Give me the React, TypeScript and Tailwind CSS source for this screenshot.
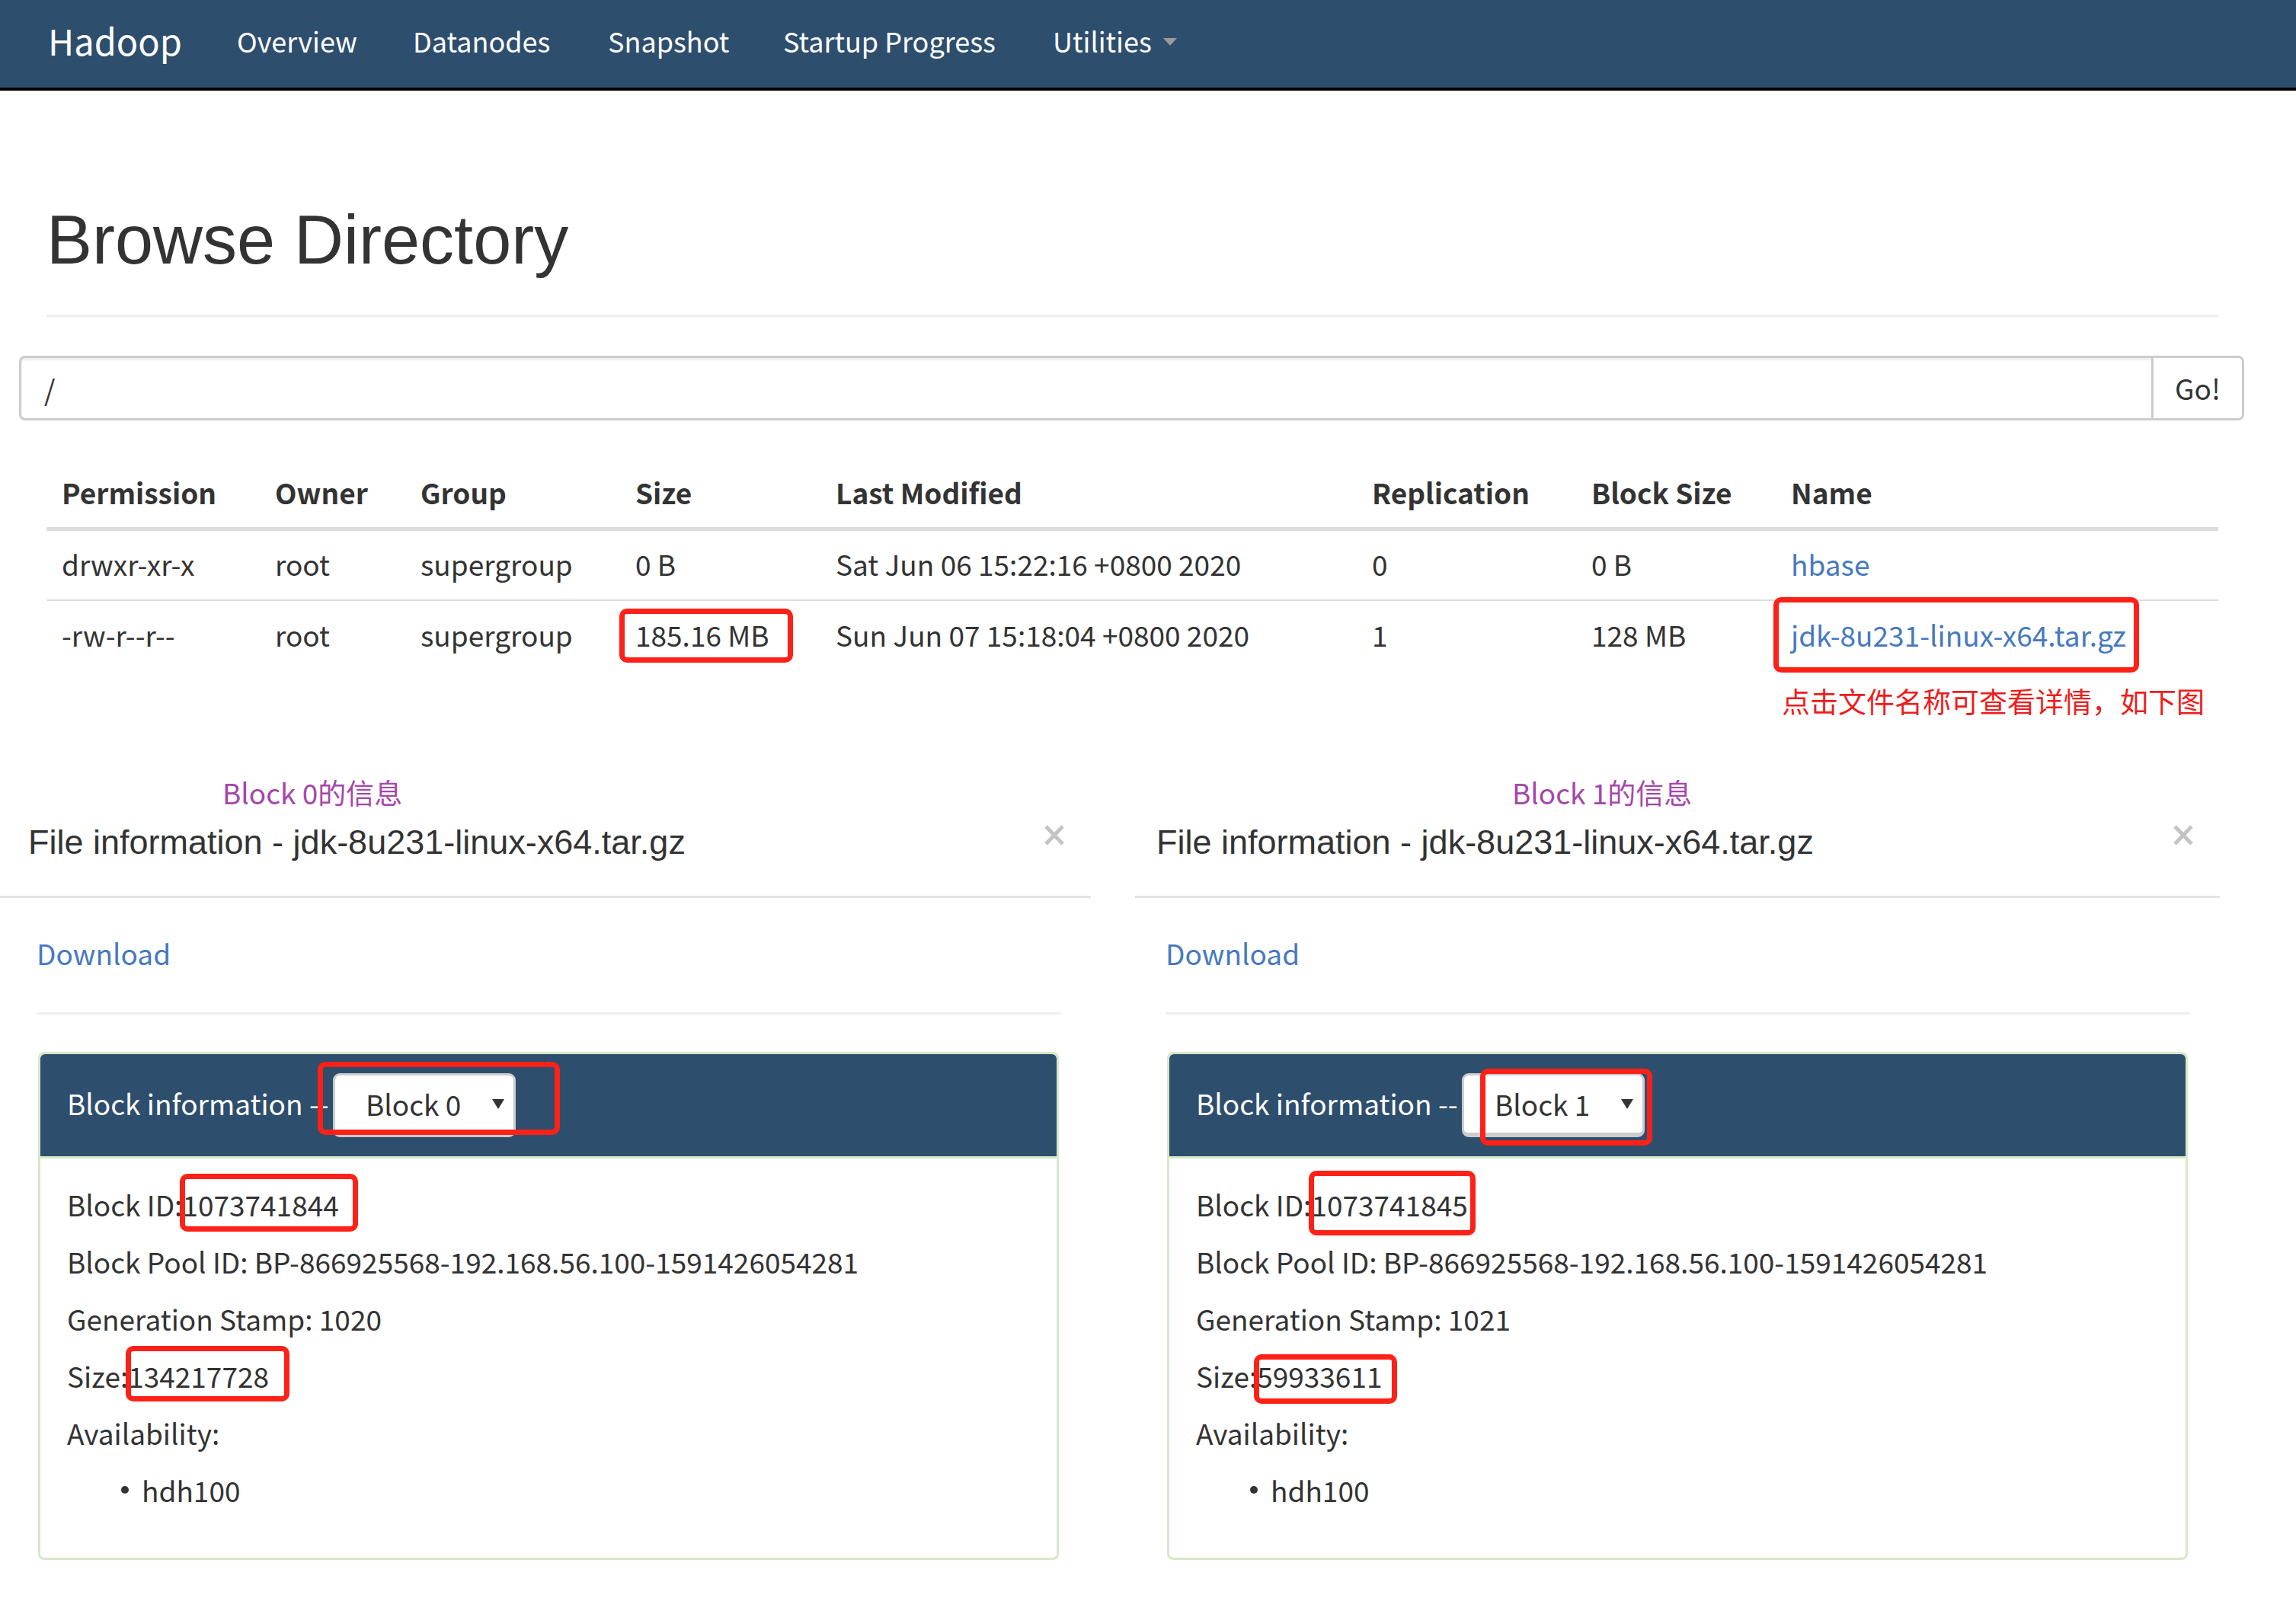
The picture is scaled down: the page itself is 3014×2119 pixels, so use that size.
import React from "react";

const Mark: React.FC<{ box: string; children: React.ReactNode }> = ({ box, children }) => (
  <span className="relative inline-block">
    {children}
    <span className={`pointer-events-none absolute rounded-[10px] border-[7px] border-[#fe2118] ${box}`} />
  </span>
);

const cols = "grid grid-cols-[280px_191px_282px_263px_704px_288px_262px_581px]";

const CloseX = () => (
  <svg width="26" height="27" viewBox="0 0 26 27" className="mt-[7px] shrink-0">
    <path d="M2 2 L24 25 M24 2 L2 25" stroke="#c4c4c4" strokeWidth="5" />
  </svg>
);

type ModalProps = {
  width: string;
  notePad: string;
  titlePad: string;
  bodyPad: string;
  block: string;
  id: string;
  gen: string;
  size: string;
  selectBox: string;
  idBox: string;
  sizeBox: string;
};

const FileModal: React.FC<ModalProps> = (p) => (
  <div className={p.width}>
    {/* header with the annotation above the title */}
    <div className="border-b-[3px] border-[#e5e5e5] pb-[40px]">
      <div className={`${p.notePad} text-[37px] leading-[52px] text-[#a646aa]`}>{p.block}的信息</div>
      <div className={`${p.titlePad} mt-[10px] flex items-start justify-between pr-[35px]`}>
        <h4 className="font-['Liberation_Sans',Arial,sans-serif] text-[45px] leading-[60px] text-[#333]">
          File information - jdk-8u231-linux-x64.tar.gz
        </h4>
        <CloseX />
      </div>
    </div>

    <div className={`${p.bodyPad} pr-[39px] pt-[46px]`}>
      <a className="block text-[37px] leading-[52px] text-[#4679c0]">Download</a>
      <hr className="mt-[52px] border-t-[3px] border-[#eee]" />

      {/* block panel */}
      <div className="ml-[2px] mt-[49px] w-[1340px] rounded-[8px] border-[3px] border-[#d6e9c6]">
        <div className="flex h-[137px] items-center rounded-t-[6px] border-b-[3px] border-[#d6e9c6] bg-[#2e4e6e] pl-[35px]">
          <span className="w-[349px] whitespace-nowrap pb-[4px] text-[37px] text-white">Block information --</span>
          <div className="relative">
            <div className="flex h-[84px] w-[240px] items-center justify-between rounded-[9px] border-[3px] border-b-[6px] border-[#cccccc] bg-white pl-[40px] pr-[12px] text-[37px] text-[#333]">
              <span>{p.block}</span>
              <span className="border-x-[8px] border-t-[13px] border-x-transparent border-t-[#333]" />
            </div>
            <span className={`pointer-events-none absolute rounded-[10px] border-[7px] border-[#fe2118] ${p.selectBox}`} />
          </div>
        </div>
        <div className="pb-[61px] pl-[35px] pt-[32px] text-[37px] leading-[56px] text-[#333]">
          <p className="mb-[19px]">
            Block ID:<Mark box={p.idBox}>{p.id}</Mark>
          </p>
          <p className="mb-[19px]">Block Pool ID: BP-866925568-192.168.56.100-1591426054281</p>
          <p className="mb-[19px]">Generation Stamp: {p.gen}</p>
          <p className="mb-[19px]">
            Size:<Mark box={p.sizeBox}>{p.size}</Mark>
          </p>
          <p className="mb-[19px]">Availability:</p>
          <div className="flex items-center">
            <span className="ml-[71px] mr-[17px] h-[10px] w-[10px] rounded-full bg-[#333]" />
            <span>hdh100</span>
          </div>
        </div>
      </div>
    </div>
  </div>
);

export default function App() {
  return (
    <div className="h-[2119px] w-[3014px] overflow-hidden bg-white font-['Noto_Sans_CJK_SC',sans-serif] text-[#333]">
      {/* navbar */}
      <nav className="flex h-[119px] items-center border-b-4 border-black bg-[#2e4e6e] pb-[10px] pl-[63px] text-white">
        <a className="w-[248px] text-[47px] leading-[60px]">Hadoop</a>
        <a className="w-[231px] text-[36px]">Overview</a>
        <a className="w-[256px] text-[36px]">Datanodes</a>
        <a className="w-[230px] text-[36px]">Snapshot</a>
        <a className="w-[354px] text-[36px]">Startup Progress</a>
        <a className="flex items-center gap-[15px] text-[36px]">
          Utilities
          <span className="mt-[4px] border-x-[9px] border-t-[10px] border-x-transparent border-t-[#9a9a9a]" />
        </a>
      </nav>

      {/* page header */}
      <div className="mx-[61px] mt-[147px] w-[2851px]">
        <h1 className="font-['Liberation_Sans',Arial,sans-serif] text-[90px] leading-[99px] text-[#333]">
          Browse Directory
        </h1>
        <hr className="mt-[48px] border-t-[3px] border-[#eee]" />
      </div>

      {/* path input */}
      <div className="mx-[25px] mt-[51px] flex h-[85px] w-[2921px]">
        <input
          readOnly
          value="/"
          className="h-full flex-1 rounded-l-[8px] border-[3px] border-r-0 border-[#cccccc] pl-[30px] text-[37px] text-[#333] shadow-[inset_0_3px_3px_rgba(0,0,0,0.075)] outline-none"
        />
        <button className="flex h-full w-[122px] items-center justify-center rounded-r-[8px] border-[3px] border-[#cccccc] bg-white text-[37px] text-[#333]">
          Go!
        </button>
      </div>

      {/* listing */}
      <div className="mx-[61px] mt-[52px] w-[2851px] text-[37px] leading-[56px]">
        <div className={`${cols} h-[93px] items-center border-b-[5px] border-[#ddd] font-bold`}>
          {["Permission", "Owner", "Group", "Size", "Last Modified", "Replication", "Block Size", "Name"].map((h) => (
            <div key={h} className="pb-[4px] pl-[20px]">{h}</div>
          ))}
        </div>
        <div className={`${cols} h-[90px] items-center`}>
          <div className="pb-[4px] pl-[20px]">drwxr-xr-x</div>
          <div className="pb-[4px] pl-[20px]">root</div>
          <div className="pb-[4px] pl-[20px]">supergroup</div>
          <div className="pb-[4px] pl-[20px]">0 B</div>
          <div className="pb-[4px] pl-[20px]">Sat Jun 06 15:22:16 +0800 2020</div>
          <div className="pb-[4px] pl-[20px]">0</div>
          <div className="pb-[4px] pl-[20px]">0 B</div>
          <div className="pb-[4px] pl-[20px]"><a className="text-[#4679c0]">hbase</a></div>
        </div>
        <div className={`${cols} h-[93px] items-center border-t-2 border-[#ddd]`}>
          <div className="pb-[4px] pl-[20px]">-rw-r--r--</div>
          <div className="pb-[4px] pl-[20px]">root</div>
          <div className="pb-[4px] pl-[20px]">supergroup</div>
          <div className="pb-[4px] pl-[20px]">
            <Mark box="left-[-21px] right-[-31px] top-[-6px] bottom-[-9px]">185.16 MB</Mark>
          </div>
          <div className="pb-[4px] pl-[20px]">Sun Jun 07 15:18:04 +0800 2020</div>
          <div className="pb-[4px] pl-[20px]">1</div>
          <div className="pb-[4px] pl-[20px]">128 MB</div>
          <div className="pb-[4px] pl-[20px]">
            <Mark box="left-[-23px] right-[-17px] top-[-21px] bottom-[-22px]">
              <a className="text-[#4679c0]">jdk-8u231-linux-x64.tar.gz</a>
            </Mark>
          </div>
        </div>
        <div className="mt-[14px] pl-[2278px] text-[37px] leading-[52px] text-[#ef1c1c]">
          点击文件名称可查看详情，如下图
        </div>
      </div>

      {/* the two block views */}
      <div className="mt-[68px] flex gap-[58px]">
        <FileModal
          width="w-[1432px]"
          notePad="pl-[292px]"
          titlePad="pl-[37px]"
          bodyPad="pl-[48px]"
          block="Block 0"
          id="1073741844"
          gen="1020"
          size="134217728"
          selectBox="left-[-20px] right-[-58px] top-[-15px] bottom-[3px]"
          idBox="left-[-3px] right-[-25px] top-[-12px] bottom-[-8px]"
          sizeBox="left-[-3px] right-[-27px] top-[-11px] bottom-[-6px]"
        />
        <FileModal
          width="w-[1424px]"
          notePad="pl-[495px]"
          titlePad="pl-[28px]"
          bodyPad="pl-[40px]"
          block="Block 1"
          id="1073741845"
          gen="1021"
          size="59933611"
          selectBox="left-[24px] right-[-10px] top-[-6px] bottom-[-11px]"
          idBox="left-[-3px] right-[-10px] top-[-16px] bottom-[-13px]"
          sizeBox="left-[-4px] right-[-20px] top-[0px] bottom-[-9px]"
        />
      </div>
    </div>
  );
}
